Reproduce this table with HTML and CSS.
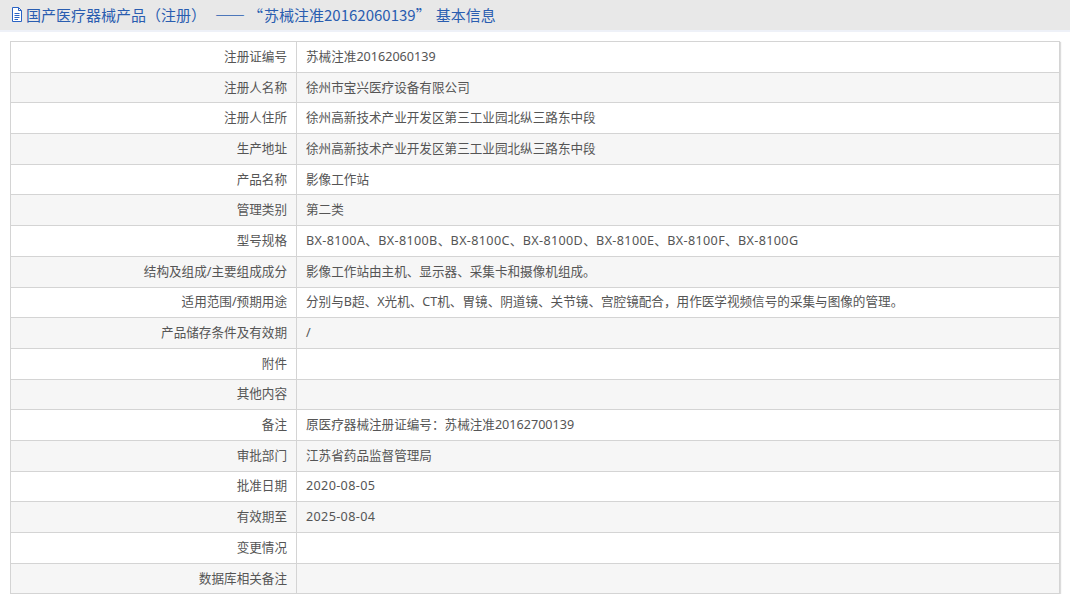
FILE: index.html
```html
<!DOCTYPE html>
<html lang="zh-CN">
<head>
<meta charset="utf-8">
<title>基本信息</title>
<link rel="stylesheet" href="styles.css">
</head>
<body>
<div class="header">
  <svg class="doc-icon" width="12" height="15" viewBox="0 0 12 15">
    <path d="M1.5 0.5 H7.5 L10.5 3.5 V14.5 H1.5 Z" fill="#fff" stroke="#2a63c4" stroke-width="1"/>
    <path d="M7.5 0.5 V3.5 H10.5" fill="none" stroke="#2a63c4" stroke-width="1"/>
    <path d="M3.5 6.5 H8.5 M3.5 8.5 H8.5 M3.5 10.5 H8.5 M3.5 12.5 H7" stroke="#2a63c4" stroke-width="1"/>
  </svg>
  <span class="title">国产医疗器械产品（注册）<span class="dash">——</span><span class="q-open">“</span>苏械注准20162060139<span class="q-close">”</span>基本信息</span>
</div>
<div class="band"></div>
<div class="wrap">
<table class="info">
  <tr><td class="k">注册证编号</td><td class="v">苏械注准20162060139</td></tr>
  <tr><td class="k">注册人名称</td><td class="v">徐州市宝兴医疗设备有限公司</td></tr>
  <tr><td class="k">注册人住所</td><td class="v">徐州高新技术产业开发区第三工业园北纵三路东中段</td></tr>
  <tr><td class="k">生产地址</td><td class="v">徐州高新技术产业开发区第三工业园北纵三路东中段</td></tr>
  <tr><td class="k">产品名称</td><td class="v">影像工作站</td></tr>
  <tr><td class="k">管理类别</td><td class="v">第二类</td></tr>
  <tr><td class="k">型号规格</td><td class="v wide">BX-8100A、BX-8100B、BX-8100C、BX-8100D、BX-8100E、BX-8100F、BX-8100G</td></tr>
  <tr><td class="k">结构及组成/主要组成成分</td><td class="v">影像工作站由主机、显示器、采集卡和摄像机组成。</td></tr>
  <tr><td class="k">适用范围/预期用途</td><td class="v">分别与B超、X光机、CT机、胃镜、阴道镜、关节镜、宫腔镜配合，用作医学视频信号的采集与图像的管理。</td></tr>
  <tr><td class="k">产品储存条件及有效期</td><td class="v">/</td></tr>
  <tr><td class="k">附件</td><td class="v"></td></tr>
  <tr><td class="k">其他内容</td><td class="v"></td></tr>
  <tr><td class="k">备注</td><td class="v">原医疗器械注册证编号：苏械注准20162700139</td></tr>
  <tr><td class="k">审批部门</td><td class="v">江苏省药品监督管理局</td></tr>
  <tr><td class="k">批准日期</td><td class="v wide">2020-08-05</td></tr>
  <tr><td class="k">有效期至</td><td class="v wide">2025-08-04</td></tr>
  <tr><td class="k">变更情况</td><td class="v"></td></tr>
  <tr><td class="k">数据库相关备注</td><td class="v"></td></tr>
</table>
</div>
</body>
</html>
```
FILE: styles.css
```css
html, body {
  margin: 0;
  padding: 0;
  background: #fff;
}
body {
  font-family: "Noto Sans", "Noto Sans CJK SC", sans-serif;
  color: #555;
  font-size: 12.6px;
}
.header {
  height: 30px;
  background: #e8e8e8;
  display: flex;
  align-items: center;
  padding-left: 11px;
  box-sizing: border-box;
}
.doc-icon {
  display: block;
  margin-right: 3px;
  margin-top: -1px;
}
.title {
  color: #2a5db0;
  font-size: 15px;
  line-height: 30px;
  font-family: "Noto Sans CJK SC", sans-serif;
}
.title .dash {
  margin-left: 9px;
  letter-spacing: 3px;
}
.title .q-open {
  margin-right: 1px;
}
.title .q-close {
  margin-right: 5px;
}
.band {
  height: 2px;
  background: #eef1f8;
}
.wrap {
  padding: 9px 10px 0 10px;
}
.info {
  width: 1050px;
  border-collapse: collapse;
  border: 1px solid #cfcfcf;
  box-shadow: 1px 1px 1px #dcdcdc;
}
.info td {
  border: 1px solid #d4d4d4;
  height: 29.7px;
  padding: 0;
  line-height: 16px;
  vertical-align: middle;
}
.info tr:nth-child(even) td {
  background: #f6f6f6;
}
.info td.k {
  width: 276px;
  text-align: right;
  padding-right: 9px;
}
.info td.v {
  padding-left: 9px;
}
.info td.wide {
  letter-spacing: 0.35px;
}
```
